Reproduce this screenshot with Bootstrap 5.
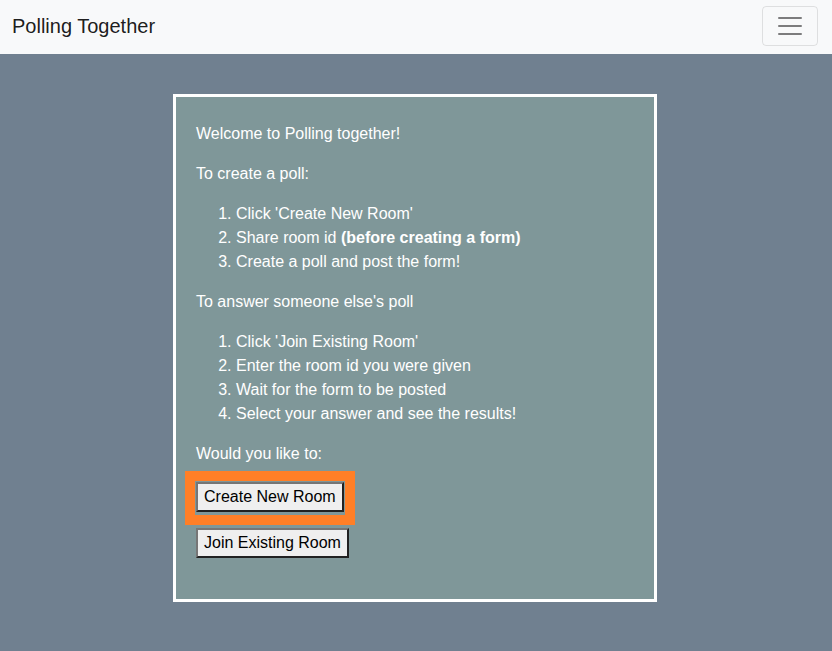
<!DOCTYPE html>
<html lang="en">
<head>
<meta charset="utf-8">
<meta name="viewport" content="width=device-width, initial-scale=1">
<title>Polling Together</title>
<link href="https://cdn.jsdelivr.net/npm/bootstrap@5.3.0/dist/css/bootstrap.min.css" rel="stylesheet">
<style>
  body {
    font-family: "Liberation Sans", Arial, sans-serif;
    background: #708090;
  }
  .top-bar {
    --bs-navbar-brand-color: rgba(0, 0, 0, .9);
    --bs-navbar-toggler-border-color: rgba(0, 0, 0, .1);
    --bs-navbar-toggler-border-radius: 4px;
    padding: 6px 2px 8px 0;
  }
  .top-bar .navbar-brand { line-height: 30px; padding: 5px 0; }
  .top-bar .navbar-toggler-icon {
    --bs-navbar-toggler-icon-bg: url("data:image/svg+xml,%3csvg xmlns='http://www.w3.org/2000/svg' viewBox='0 0 30 30'%3e%3cpath stroke='rgba%280, 0, 0, 0.5%29' stroke-linecap='round' stroke-miterlimit='10' stroke-width='2' d='M4 7h22M4 15h22M4 23h22'/%3e%3c/svg%3e");
  }
  .page-area { padding: 40px 2px 40px 0; }
  .welcome-panel {
    width: 100%;
    max-width: 484px;
    padding: 25px 20px 41px;
    border: 3px solid #fff;
    background: #7f9799;
    color: #fff;
  }
  .welcome-panel ol { padding-left: 40px; }
  .room-actions { gap: 16px; }
  .room-button {
    height: 30px;
    padding: 1px 6px;
    border: 2px solid;
    border-color: #767676 #212121 #212121 #767676;
    background: #efefef;
    color: #000;
    line-height: 24px;
  }
  .step-highlight {
    position: absolute;
    inset: -11px -11px -13px;
    border: 10px solid #ff7f27;
    pointer-events: none;
  }
</style>
</head>
<body>
<nav class="navbar navbar-light bg-light top-bar">
  <div class="container-fluid">
    <a class="navbar-brand" href="#">Polling Together</a>
    <button class="navbar-toggler" type="button" data-bs-toggle="collapse" data-bs-target="#mainMenu" aria-controls="mainMenu" aria-expanded="false" aria-label="Toggle navigation">
      <span class="navbar-toggler-icon"></span>
    </button>
    <div class="collapse navbar-collapse" id="mainMenu"></div>
  </div>
</nav>
<main class="page-area d-flex justify-content-center">
  <section class="welcome-panel">
    <p>Welcome to Polling together!</p>
    <p>To create a poll:</p>
    <ol>
      <li>Click 'Create New Room'</li>
      <li>Share room id <b>(before creating a form)</b></li>
      <li>Create a poll and post the form!</li>
    </ol>
    <p>To answer someone else's poll</p>
    <ol>
      <li>Click 'Join Existing Room'</li>
      <li>Enter the room id you were given</li>
      <li>Wait for the form to be posted</li>
      <li>Select your answer and see the results!</li>
    </ol>
    <p>Would you like to:</p>
    <div class="room-actions d-flex flex-column align-items-start">
      <div class="position-relative d-flex">
        <button type="button" class="room-button">Create New Room</button>
        <span class="step-highlight"></span>
      </div>
      <button type="button" class="room-button">Join Existing Room</button>
    </div>
  </section>
</main>
<script src="https://cdn.jsdelivr.net/npm/bootstrap@5.3.0/dist/js/bootstrap.bundle.min.js"></script>
</body>
</html>
